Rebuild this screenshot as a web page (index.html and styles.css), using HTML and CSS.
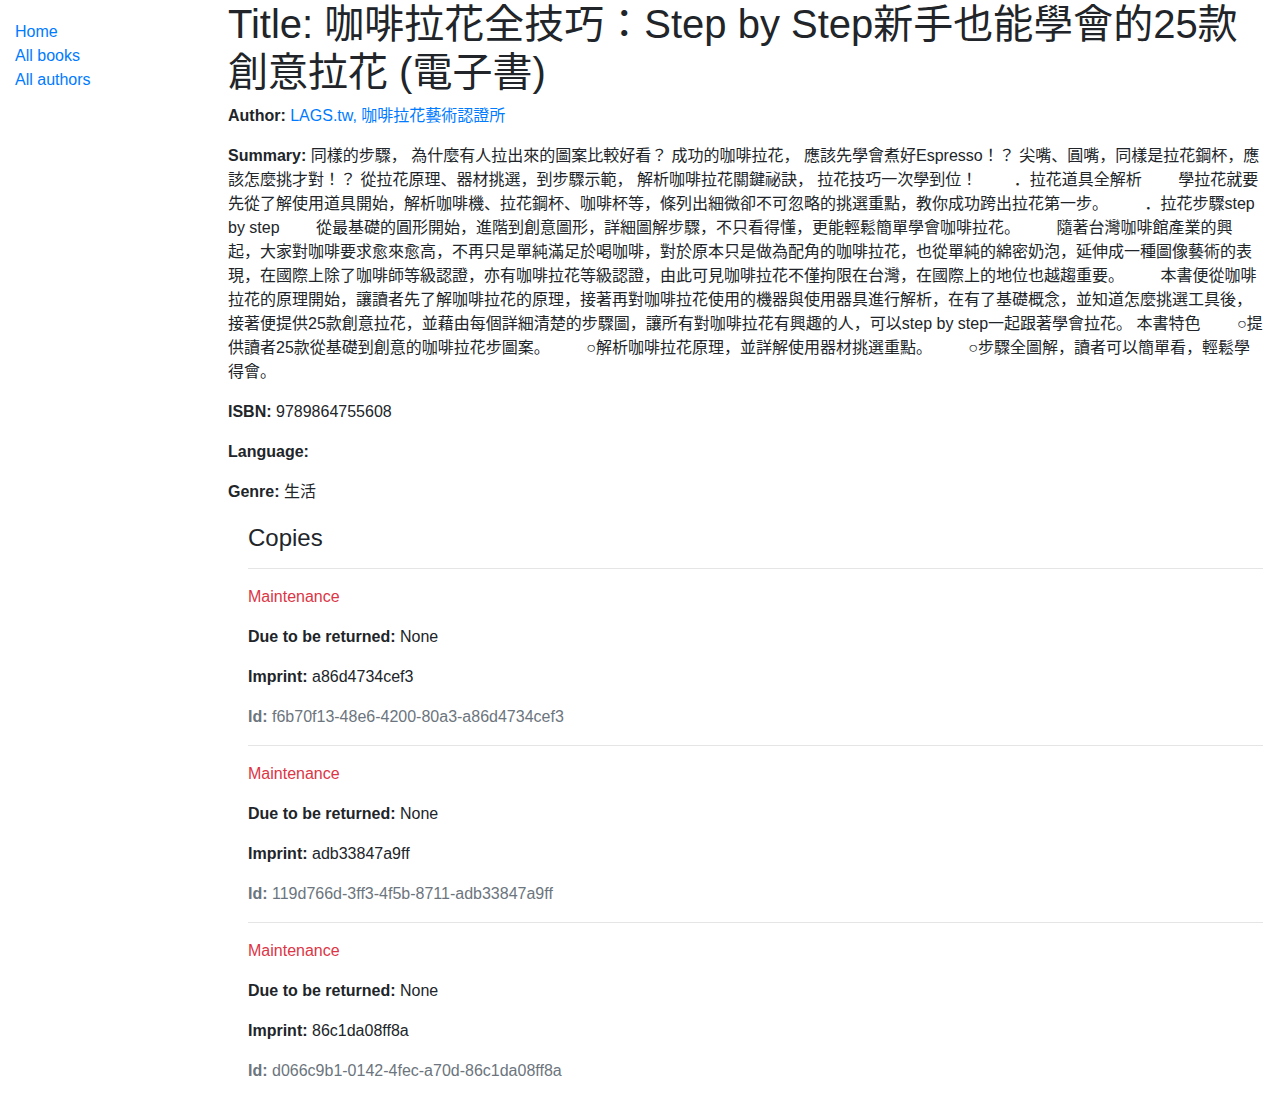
FILE: index.html
```html
<!DOCTYPE html>
<html lang="en">
<head>
<meta charset="utf-8">
<title>Local Library</title>
<link rel="stylesheet" href="styles.css">
</head>
<body>
<div class="container-fluid">
  <div class="row">
    <div class="col-side">
      <ul class="sidebar-nav">
        <li><a href="#">Home</a></li>
        <li><a href="#">All books</a></li>
        <li><a href="#">All authors</a></li>
      </ul>
    </div>
    <div class="col-main">
      <h1 class="title">Title: 咖啡拉花全技巧：Step by Step新手也能學會的25款創意拉花 (電子書)</h1>
      <p><strong>Author:</strong> <a href="#">LAGS.tw, 咖啡拉花藝術認證所</a></p>
      <p><strong>Summary:</strong> 同樣的步驟， 為什麼有人拉出來的圖案比較好看？ 成功的咖啡拉花， 應該先學會煮好Espresso！？ 尖嘴、圓嘴，同樣是拉花鋼杯，應該怎麼挑才對！？ 從拉花原理、器材挑選，到步驟示範， 解析咖啡拉花關鍵祕訣， 拉花技巧一次學到位！ 　　．拉花道具全解析 　　學拉花就要先從了解使用道具開始，解析咖啡機、拉花鋼杯、咖啡杯等，條列出細微卻不可忽略的挑選重點，教你成功跨出拉花第一步。 　　．拉花步驟step by step 　　從最基礎的圓形開始，進階到創意圖形，詳細圖解步驟，不只看得懂，更能輕鬆簡單學會咖啡拉花。 　　隨著台灣咖啡館產業的興起，大家對咖啡要求愈來愈高，不再只是單純滿足於喝咖啡，對於原本只是做為配角的咖啡拉花，也從單純的綿密奶泡，延伸成一種圖像藝術的表現，在國際上除了咖啡師等級認證，亦有咖啡拉花等級認證，由此可見咖啡拉花不僅拘限在台灣，在國際上的地位也越趨重要。 　　本書便從咖啡拉花的原理開始，讓讀者先了解咖啡拉花的原理，接著再對咖啡拉花使用的機器與使用器具進行解析，在有了基礎概念，並知道怎麼挑選工具後，接著便提供25款創意拉花，並藉由每個詳細清楚的步驟圖，讓所有對咖啡拉花有興趣的人，可以step by step一起跟著學會拉花。 本書特色 　　○提供讀者25款從基礎到創意的咖啡拉花步圖案。 　　○解析咖啡拉花原理，並詳解使用器材挑選重點。 　　○步驟全圖解，讀者可以簡單看，輕鬆學得會。</p>
      <p><strong>ISBN:</strong> 9789864755608</p>
      <p><strong>Language:</strong> </p>
      <p><strong>Genre:</strong> 生活</p>

      <div class="copies">
        <h4 class="copies-title">Copies</h4>

        <hr>
        <p class="text-danger">Maintenance</p>
        <p><strong>Due to be returned:</strong> None</p>
        <p><strong>Imprint:</strong> a86d4734cef3</p>
        <p class="text-muted"><strong>Id:</strong> f6b70f13-48e6-4200-80a3-a86d4734cef3</p>

        <hr>
        <p class="text-danger">Maintenance</p>
        <p><strong>Due to be returned:</strong> None</p>
        <p><strong>Imprint:</strong> adb33847a9ff</p>
        <p class="text-muted"><strong>Id:</strong> 119d766d-3ff3-4f5b-8711-adb33847a9ff</p>

        <hr>
        <p class="text-danger">Maintenance</p>
        <p><strong>Due to be returned:</strong> None</p>
        <p><strong>Imprint:</strong> 86c1da08ff8a</p>
        <p class="text-muted"><strong>Id:</strong> d066c9b1-0142-4fec-a70d-86c1da08ff8a</p>
      </div>
    </div>
  </div>
</div>
</body>
</html>
```

FILE: styles.css
```css
html, body {
  margin: 0;
}
body {
  font-family: "Liberation Sans", "Noto Sans CJK JP", sans-serif;
  font-size: 16px;
  line-height: 1.5;
  color: #212529;
  background: #fff;
}
a {
  color: #007bff;
  text-decoration: none;
}
strong {
  font-weight: 700;
}
p {
  margin: 0 0 16px 0;
}
.container-fluid {
  padding: 0 15px;
}
.row {
  display: flex;
  margin: 0 -15px;
}
.col-side {
  flex: 0 0 16.666667%;
  max-width: 16.666667%;
  padding: 0 15px;
  box-sizing: border-box;
}
.col-main {
  flex: 0 0 83.333333%;
  max-width: 83.333333%;
  padding: 0 15px;
  box-sizing: border-box;
}
.sidebar-nav {
  margin: 20px 0 0 0;
  padding: 0;
  list-style: none;
}
.title {
  font-size: 40px;
  font-weight: 400;
  line-height: 1.2;
  margin: 0 0 8px 0;
}
.copies {
  margin-left: 20px;
  margin-top: 20px;
}
.copies-title {
  font-size: 24px;
  font-weight: 400;
  line-height: 28px;
  margin: 0 0 8px 0;
}
hr {
  margin: 16px 0;
  border: 0;
  border-top: 1px solid rgba(0, 0, 0, 0.1);
  height: 0;
}
.text-danger {
  color: #dc3545;
}
.text-muted {
  color: #6c757d;
}
```
